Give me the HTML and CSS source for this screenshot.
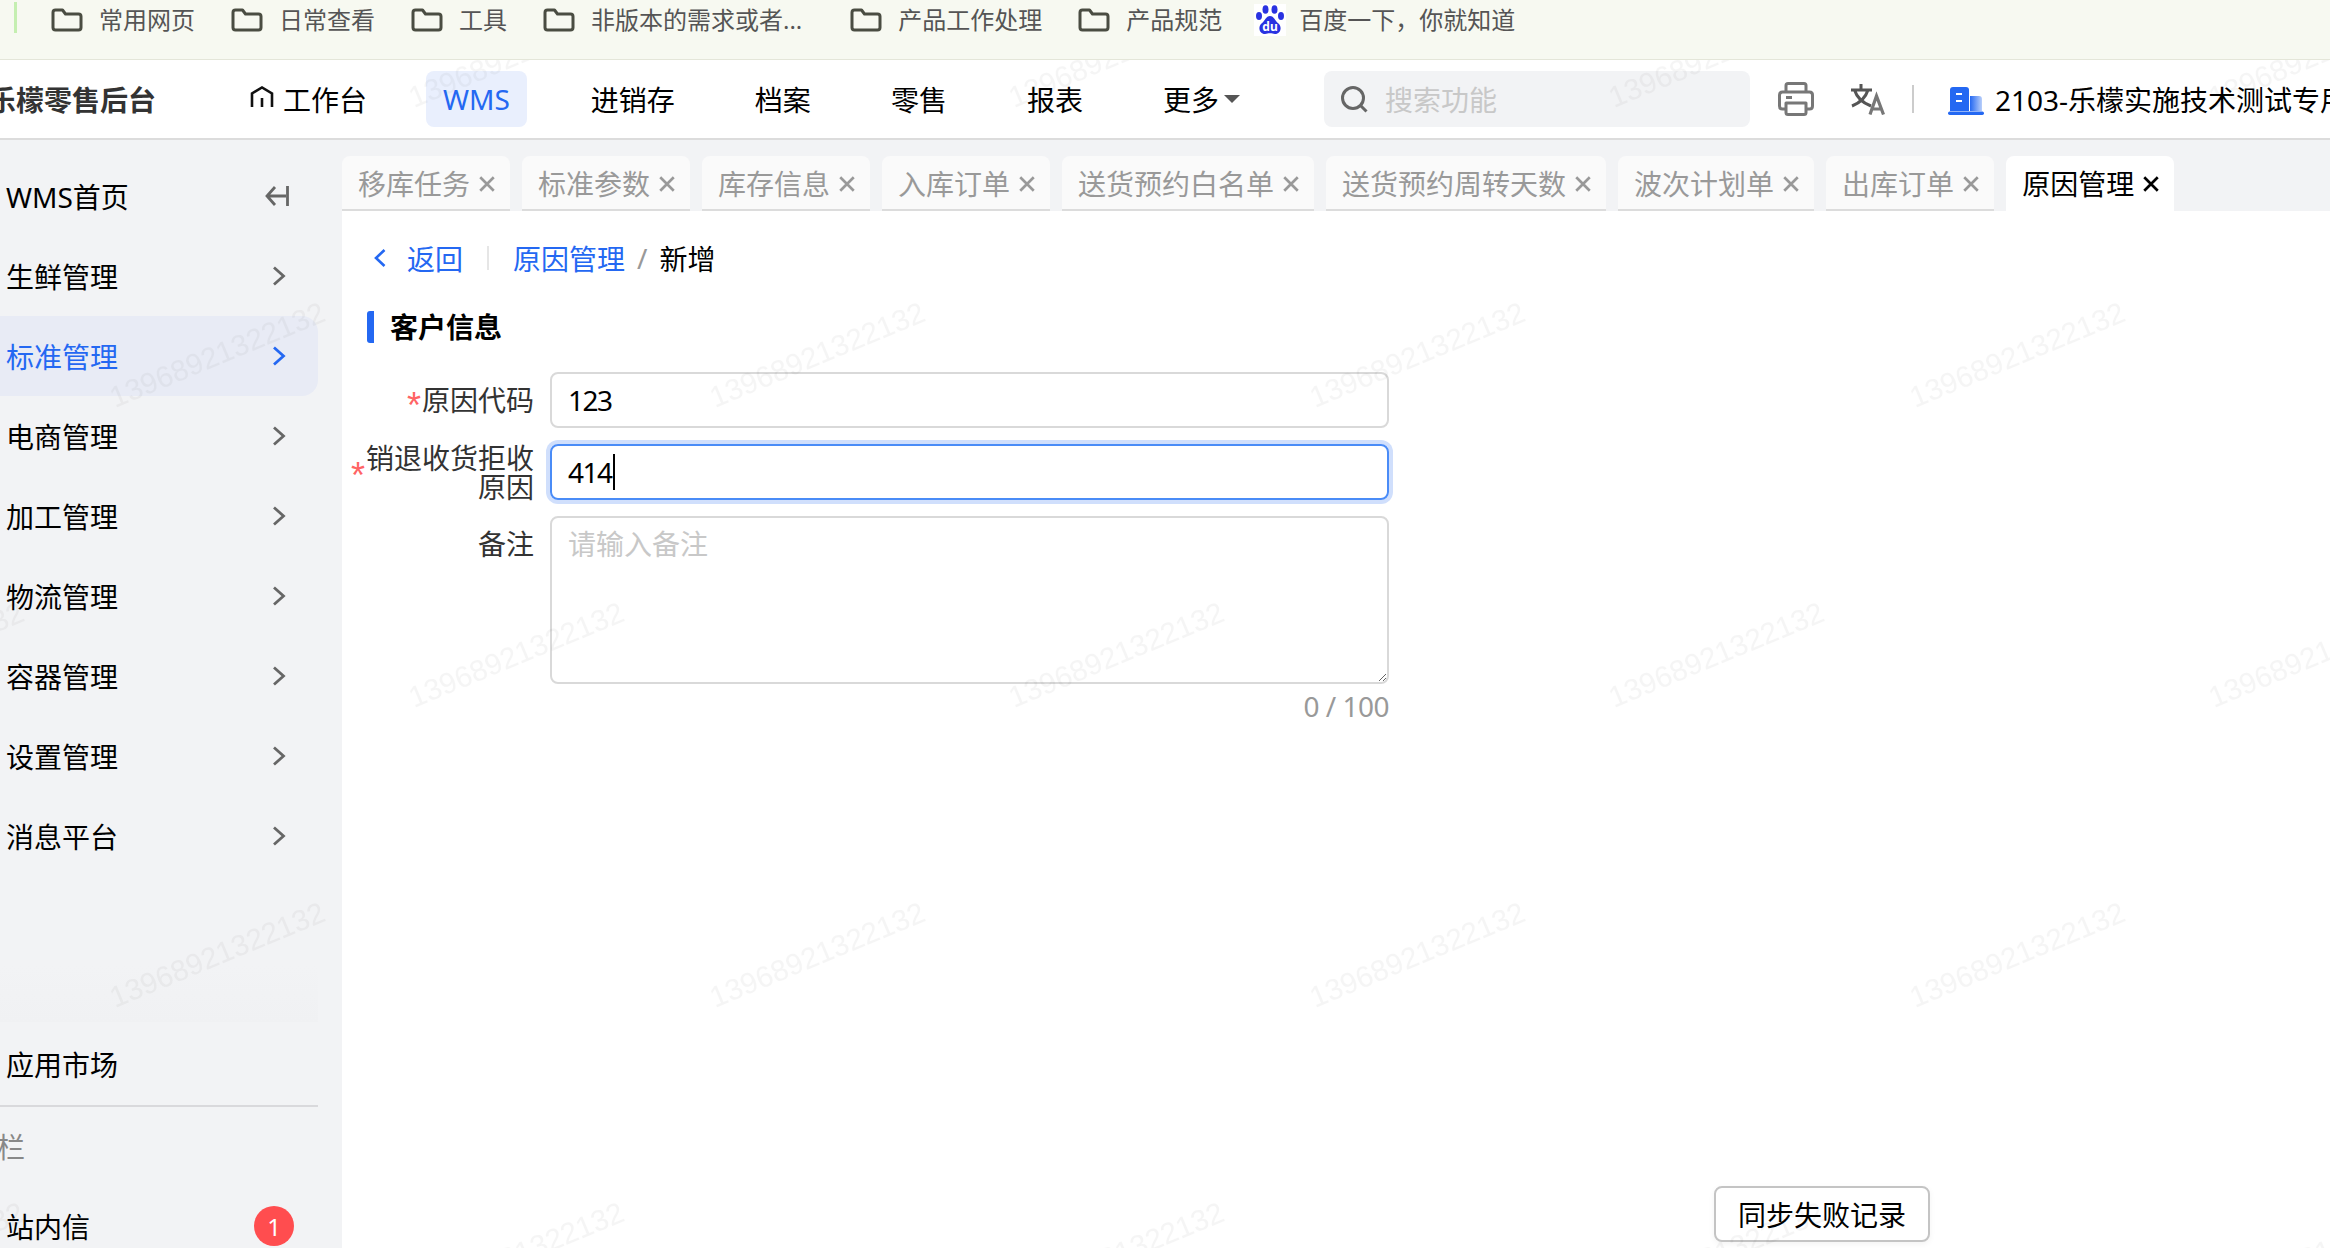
FILE: index.html
```html
<!DOCTYPE html>
<html lang="zh-CN">
<head>
    <meta charset="UTF-8">
    <meta name="viewport" content="width=device-width, initial-scale=1.0">
    <title>原因管理</title>
    <link rel="stylesheet" href="styles.css">
</head>
<body>
    <!-- 图标 -->
    <svg class="sprite">
        <symbol id="i-folder" viewBox="0 0 32 24">
            <path d="M2 4.5Q2 2 4.5 2H11.5L14.5 6H27.5Q30 6 30 8.5V19.5Q30 22 27.5 22H4.5Q2 22 2 19.5Z" fill="none" stroke="currentColor" stroke-width="3" stroke-linejoin="round"/>
        </symbol>
        <symbol id="i-x" viewBox="0 0 16 16">
            <path d="M2 2L14 14M14 2L2 14" fill="none" stroke="currentColor" stroke-width="2.4"/>
        </symbol>
        <symbol id="i-right" viewBox="0 0 14 20">
            <path d="M2 1.5L11.5 10L2 18.5" fill="none" stroke="currentColor" stroke-width="2.8"/>
        </symbol>
    </svg>

    <!-- 浏览器书签栏 -->
    <div class="bookmarks">
        <span class="bm-line"></span>
        <a class="bm"><svg class="bm-folder"><use href="#i-folder"/></svg>常用网页</a>
        <a class="bm"><svg class="bm-folder"><use href="#i-folder"/></svg>日常查看</a>
        <a class="bm"><svg class="bm-folder"><use href="#i-folder"/></svg>工具</a>
        <a class="bm bm-long"><svg class="bm-folder"><use href="#i-folder"/></svg>非版本的需求或者...</a>
        <a class="bm"><svg class="bm-folder"><use href="#i-folder"/></svg>产品工作处理</a>
        <a class="bm"><svg class="bm-folder"><use href="#i-folder"/></svg>产品规范</a>
        <a class="bm bm-baidu">
            <svg class="baidu" viewBox="0 0 32 32">
                <rect width="32" height="32" fill="#fff"/>
                <g fill="#2932e1">
                    <ellipse cx="11.5" cy="5.5" rx="3" ry="4.3"/>
                    <ellipse cx="20.5" cy="5.5" rx="3" ry="4.3"/>
                    <ellipse cx="5" cy="12" rx="3" ry="4"/>
                    <ellipse cx="27" cy="12" rx="3" ry="4"/>
                    <path d="M16 12C20 12 21 17 24.5 19.5C28.5 23 26.5 30 21 30C19 30 18 29.3 16 29.3C14 29.3 13 30 11 30C5.5 30 3.5 23 7.5 19.5C11 17 12 12 16 12Z"/>
                </g>
                <text x="16" y="27" class="baidu-du">du</text>
            </svg>
            百度一下，你就知道
        </a>
    </div>

    <!-- 顶部导航 -->
    <header class="topbar">
        <div class="logo">乐檬零售后台</div>
        <nav class="nav">
            <a class="nav-item nav-home">
                <svg class="home" viewBox="0 0 24 22"><path d="M2 21V7.5L12 1.5L22 7.5V21M12 12V21" fill="none" stroke="#111" stroke-width="2.6"/></svg>
                工作台
            </a>
            <a class="nav-item active">WMS</a>
            <a class="nav-item">进销存</a>
            <a class="nav-item">档案</a>
            <a class="nav-item">零售</a>
            <a class="nav-item">报表</a>
            <a class="nav-item">更多<span class="caret"></span></a>
        </nav>
        <div class="search">
            <svg class="search-icon" viewBox="0 0 28 28"><circle cx="13" cy="13" r="10.5" fill="none" stroke="#666" stroke-width="3"/><path d="M20.5 20.5L26.5 26.5" stroke="#666" stroke-width="3"/></svg>
            <span>搜索功能</span>
        </div>
        <svg class="printer" viewBox="0 0 36 34">
            <g fill="none" stroke="#777" stroke-width="3" stroke-linejoin="round">
                <path d="M8 10V3.5Q8 1.5 10 1.5H26Q28 1.5 28 3.5V10"/>
                <path d="M8 27H4.5Q1.5 27 1.5 24V13Q1.5 10 4.5 10H31.5Q34.5 10 34.5 13V24Q34.5 27 31.5 27H28"/>
                <path d="M8 21H28V30.5Q28 32.5 26 32.5H10Q8 32.5 8 30.5Z"/>
                <path d="M8 15.5H14"/>
            </g>
        </svg>
        <svg class="translate" viewBox="0 0 35 32">
            <g fill="none" stroke="#555" stroke-width="3">
                <path d="M1 7H22M11 1V7M4.5 7C7 15 13 20 21 23M18 7C15.5 15 9.5 20 2 23"/>
            </g>
            <path d="M20 31.5L26.5 13L33.5 31.5M22.5 26H31" fill="none" stroke="#777" stroke-width="3.2"/>
        </svg>
        <span class="top-line"></span>
        <svg class="org-icon" viewBox="0 0 36 28">
            <defs>
                <linearGradient id="org-fade" x1="0" x2="1" y1="0" y2="0">
                    <stop offset="0" stop-color="#2468f2"/>
                    <stop offset="1" stop-color="#b9cffa"/>
                </linearGradient>
            </defs>
            <path d="M2 24V3Q2 0 5 0H18Q21 0 21 3V24Z" fill="#2468f2"/>
            <path d="M22 9H31Q34 9 34 12V24H22Z" fill="url(#org-fade)"/>
            <rect x="0" y="24.5" width="36" height="3.5" rx="1.7" fill="#2468f2"/>
            <path d="M8 7H14M8 14H14" stroke="#fff" stroke-width="2"/>
        </svg>
        <span class="org">2103-乐檬实施技术测试专用</span>
    </header>

    <div class="app">
        <!-- 左侧菜单 -->
        <aside class="sidebar">
            <a class="menu-item">WMS首页
                <svg class="collapse" viewBox="0 0 24 22"><path d="M10 2L2 11L10 20M2 11H21M22.5 1V21" fill="none" stroke="#666" stroke-width="2.8"/></svg>
            </a>
            <a class="menu-item">生鲜管理<svg class="chevron"><use href="#i-right"/></svg></a>
            <a class="menu-item active">标准管理<svg class="chevron"><use href="#i-right"/></svg></a>
            <a class="menu-item">电商管理<svg class="chevron"><use href="#i-right"/></svg></a>
            <a class="menu-item">加工管理<svg class="chevron"><use href="#i-right"/></svg></a>
            <a class="menu-item">物流管理<svg class="chevron"><use href="#i-right"/></svg></a>
            <a class="menu-item">容器管理<svg class="chevron"><use href="#i-right"/></svg></a>
            <a class="menu-item">设置管理<svg class="chevron"><use href="#i-right"/></svg></a>
            <a class="menu-item">消息平台<svg class="chevron"><use href="#i-right"/></svg></a>
            <div class="menu-fade"></div>
            <a class="menu-item menu-market">应用市场</a>
            <a class="menu-item menu-muted">栏</a>
            <a class="menu-item menu-letter">站内信<span class="badge">1</span></a>
        </aside>

        <main class="main">
            <!-- 页签 -->
            <div class="tabs">
                <div class="tab">移库任务<svg class="tab-x"><use href="#i-x"/></svg></div>
                <div class="tab">标准参数<svg class="tab-x"><use href="#i-x"/></svg></div>
                <div class="tab">库存信息<svg class="tab-x"><use href="#i-x"/></svg></div>
                <div class="tab">入库订单<svg class="tab-x"><use href="#i-x"/></svg></div>
                <div class="tab">送货预约白名单<svg class="tab-x"><use href="#i-x"/></svg></div>
                <div class="tab">送货预约周转天数<svg class="tab-x"><use href="#i-x"/></svg></div>
                <div class="tab">波次计划单<svg class="tab-x"><use href="#i-x"/></svg></div>
                <div class="tab">出库订单<svg class="tab-x"><use href="#i-x"/></svg></div>
                <div class="tab active">原因管理<svg class="tab-x"><use href="#i-x"/></svg></div>
            </div>

            <div class="page">
                <div class="crumbs">
                    <a class="back">
                        <svg class="back-icon" viewBox="0 0 14 20"><path d="M11.5 2L3 10L11.5 18" fill="none" stroke="currentColor" stroke-width="2.6"/></svg>
                        返回
                    </a>
                    <span class="crumb-line"></span>
                    <a class="crumb-link">原因管理</a>
                    <span class="crumb-sep">/</span>
                    <span>新增</span>
                </div>

                <div class="section-title">客户信息</div>

                <div class="form">
                    <label class="form-label"><i>*</i>原因代码</label>
                    <div class="field">123</div>

                    <label class="form-label form-label-wrap"><i>*</i><span>销退收货拒收<br>原因</span></label>
                    <div class="field focus">414<span class="cursor"></span></div>

                    <label class="form-label form-label-top">备注</label>
                    <div>
                        <textarea class="area" placeholder="请输入备注"></textarea>
                        <div class="count">0 / 100</div>
                    </div>
                </div>

                <button class="sync-btn">同步失败记录</button>
            </div>
        </main>
    </div>

    <!-- 水印 -->
    <svg class="watermark">
        <defs>
            <pattern id="wm" x="100" y="-70" width="600" height="600" patternUnits="userSpaceOnUse">
                <text transform="translate(15 418) rotate(-22.5)">13968921322132</text>
                <text transform="translate(314 118) rotate(-22.5)">13968921322132</text>
            </pattern>
        </defs>
        <rect width="100%" height="100%" fill="url(#wm)"/>
    </svg>
</body>
</html>
```

FILE: styles.css
```css
* {
    margin: 0;
    padding: 0;
    box-sizing: border-box;
}

html, body {
    height: 100%;
    overflow: hidden;
}

body {
    display: flex;
    flex-direction: column;
    position: relative;
    font-family: "Noto Sans", "Noto Sans CJK SC", sans-serif;
    font-size: 28px;
    color: #000;
    background: #fff;
}

.sprite {
    display: none;
}

/* 书签栏 */
.bookmarks {
    height: 60px;
    flex-shrink: 0;
    display: flex;
    align-items: flex-start;
    gap: 36px;
    background: #f7f9f1;
    border-bottom: 1px solid #e4e6d9;
    font-size: 24px;
    line-height: 40px;
    color: #555;
}

.bm-line {
    width: 3px;
    height: 31px;
    margin: 2px -2px 0 14px;
    background: #c5efb1;
}

.bm {
    display: flex;
    align-items: center;
    gap: 16px;
}

.bm-long {
    margin-right: 12px;
}

.bm-folder {
    width: 32px;
    height: 24px;
    color: #4a4d42;
}

.bm-baidu {
    gap: 13px;
    margin-left: -4px;
}

.baidu {
    width: 32px;
    height: 32px;
}

.baidu-du {
    font-size: 12px;
    font-weight: bold;
    fill: #fff;
    text-anchor: middle;
}

/* 顶部导航 */
.topbar {
    height: 80px;
    flex-shrink: 0;
    display: flex;
    align-items: center;
    overflow: hidden;
    background: #fff;
    border-bottom: 2px solid #dcdcdc;
}

.logo {
    flex-shrink: 0;
    margin-left: -12px;
    font-weight: 700;
    color: #333;
}

.nav {
    display: flex;
    align-items: center;
    gap: 48px;
    margin-left: 78px;
}

.nav-item {
    height: 56px;
    padding: 0 16px;
    display: flex;
    align-items: center;
    border-radius: 8px;
    white-space: nowrap;
}

.nav-item.active {
    padding: 0 17px;
    color: #2468f2;
    background: #e9effd;
}

.nav-home {
    gap: 9px;
    margin-right: -5px;
}

.home {
    width: 24px;
    height: 22px;
    margin-top: -4px;
}

.caret {
    width: 0;
    height: 0;
    margin-left: 5px;
    border-left: 8px solid transparent;
    border-right: 8px solid transparent;
    border-top: 8px solid #555;
}

.search {
    width: 426px;
    height: 56px;
    flex-shrink: 0;
    margin-left: 68px;
    padding-left: 16px;
    display: flex;
    align-items: center;
    gap: 17px;
    border-radius: 8px;
    background: #f2f3f5;
    color: #c8c8c8;
}

.search-icon {
    width: 28px;
    height: 28px;
}

.printer {
    width: 36px;
    height: 34px;
    flex-shrink: 0;
    margin-left: 28px;
}

.translate {
    width: 35px;
    height: 32px;
    flex-shrink: 0;
    margin-left: 36px;
}

.top-line {
    width: 2px;
    height: 28px;
    flex-shrink: 0;
    margin-left: 27px;
    background: #ccc;
}

.org-icon {
    width: 36px;
    height: 28px;
    flex-shrink: 0;
    margin: 4px 0 0 34px;
}

.org {
    flex-shrink: 0;
    margin-left: 11px;
    white-space: nowrap;
}

/* 主体 */
.app {
    flex: 1;
    min-height: 0;
    display: flex;
}

.sidebar {
    width: 342px;
    flex-shrink: 0;
    padding-top: 16px;
    overflow: hidden;
    background: #f2f3f5;
}

.menu-item {
    width: 318px;
    height: 80px;
    flex-shrink: 0;
    padding: 0 32px 1px 6px;
    display: flex;
    align-items: center;
    justify-content: space-between;
    border-radius: 0 16px 16px 0;
}

.menu-item.active {
    color: #2468f2;
    background: #e8ebf5;
}

.chevron {
    width: 14px;
    height: 20px;
    color: #666;
}

.menu-item.active .chevron {
    color: #2468f2;
}

.collapse {
    width: 24px;
    height: 22px;
    margin-right: -3px;
}

.menu-fade {
    width: 318px;
    height: 149px;
    background: linear-gradient(to bottom, transparent 60%, #f0f1f3 98%, transparent 98%);
}

.menu-market {
    height: 82px;
    padding-bottom: 2px;
    border-bottom: 2px solid #d9d9dc;
    border-radius: 0;
}

.menu-muted {
    color: #888;
    padding: 0 0 3px 0;
    margin-left: -3px;
}

.menu-letter {
    padding-bottom: 2px;
}

.badge {
    width: 40px;
    height: 40px;
    margin-right: -8px;
    display: flex;
    align-items: center;
    justify-content: center;
    border-radius: 50%;
    background: #ff4d4f;
    color: #fff;
    font-size: 24px;
}

.main {
    flex: 1;
    min-width: 0;
    display: flex;
    flex-direction: column;
}

/* 页签 */
.tabs {
    height: 71px;
    flex-shrink: 0;
    padding-top: 16px;
    display: flex;
    gap: 12px;
    background: #f2f3f5;
}

.tab {
    height: 55px;
    padding: 0 14px 0 16px;
    display: flex;
    align-items: center;
    gap: 8px;
    border-radius: 8px 8px 0 0;
    border-bottom: 2px solid #dcdcdc;
    background: #fafafa;
    color: #999;
    white-space: nowrap;
}

.tab.active {
    background: #fff;
    border-bottom-color: #fff;
    color: #000;
}

.tab-x {
    width: 18px;
    height: 18px;
    margin-top: 2px;
}

.tab.active .tab-x {
    stroke-width: 1px;
    stroke: #000;
}

/* 表单页 */
.page {
    flex: 1;
    position: relative;
    padding: 27px 0 0 5px;
    background: #fff;
}

.crumbs {
    height: 40px;
    padding-left: 26px;
    display: flex;
    align-items: center;
}

.back {
    display: flex;
    align-items: center;
    gap: 20px;
    color: #2468f2;
}

.back-icon {
    width: 14px;
    height: 20px;
}

.crumb-line {
    width: 2px;
    height: 24px;
    margin: 0 24px;
    background: #e6e6e6;
}

.crumb-link {
    color: #2468f2;
}

.crumb-sep {
    margin: 0 12px;
    color: #999;
}

.section-title {
    height: 32px;
    margin: 33px 0 0 20px;
    padding: 0 0 3px 16px;
    display: flex;
    align-items: center;
    border-left: 7px solid #2468f2;
    border-radius: 3px;
    font-weight: 700;
}

.form {
    width: 1042px;
    margin-top: 29px;
    display: grid;
    grid-template-columns: 187px 839px;
    column-gap: 16px;
    row-gap: 16px;
}

.form-label {
    height: 56px;
    display: flex;
    align-items: center;
    justify-content: flex-end;
    color: #333;
    text-align: right;
    line-height: 29px;
}

.form-label i {
    font-family: "Liberation Sans", sans-serif;
    font-style: normal;
    font-size: 36px;
    line-height: 20px;
    color: #ff6464;
    margin: 11px 1px 0 0;
}

.form-label-wrap i {
    margin-top: 8px;
}

.form-label-wrap span {
    padding-top: 2px;
}

.form-label-top {
    align-items: flex-start;
    padding-top: 14px;
}

.field {
    height: 56px;
    padding: 0 16px;
    display: flex;
    align-items: center;
    border: 2px solid #d9d9d9;
    border-radius: 8px;
    letter-spacing: -1.5px;
}

.field.focus {
    border-color: #4a8cf7;
    box-shadow: 0 0 0 4px #d0dffc;
}

.cursor {
    width: 2px;
    height: 36px;
    margin-left: 1px;
    background: #000;
}

.area {
    display: block;
    width: 839px;
    height: 168px;
    padding: 5px 16px;
    border: 2px solid #d9d9d9;
    border-radius: 8px;
    outline: none;
    font-family: inherit;
    font-size: 28px;
    line-height: 1.5;
    background: transparent;
}

.area::placeholder {
    color: #c8c8c8;
}

.count {
    margin-top: 2px;
    text-align: right;
    color: #999;
    line-height: 40px;
    letter-spacing: -0.5px;
}

.sync-btn {
    position: absolute;
    left: 1372px;
    top: 975px;
    width: 216px;
    height: 56px;
    border: 2px solid #c4c4c4;
    border-radius: 8px;
    background: #fff;
    box-shadow: 0 2px 6px rgba(0, 0, 0, 0.05);
    font-family: inherit;
    font-size: 28px;
    color: #000;
}

/* 水印铺满导航以下区域 */
.watermark {
    position: absolute;
    top: 60px;
    left: 0;
    width: 100%;
    height: calc(100% - 60px);
    pointer-events: none;
}

.watermark text {
    font-family: "Liberation Sans", sans-serif;
    font-size: 29.5px;
    fill: rgba(0, 0, 0, 0.04);
}
```
